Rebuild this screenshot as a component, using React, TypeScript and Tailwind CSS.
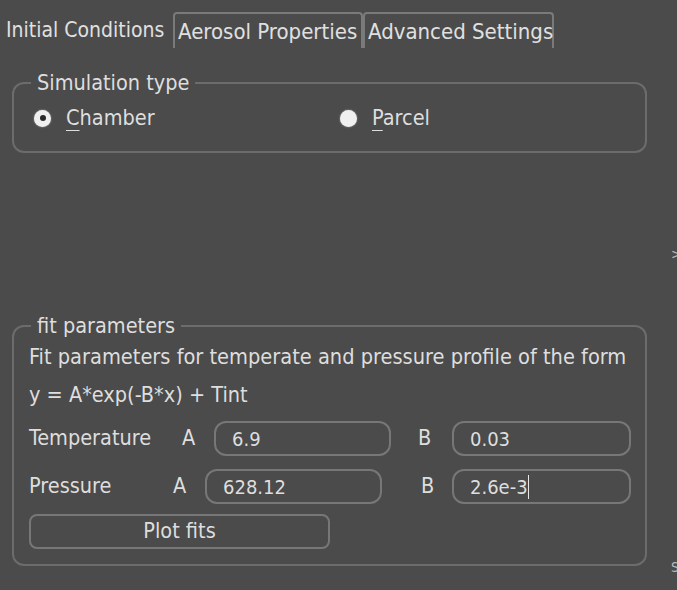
import React from "react";

const font = { fontFamily: '"DejaVu Sans Condensed", "DejaVu Sans", sans-serif' };

function Radio({ checked, label, ul }: { checked: boolean; label: string; ul: string }) {
  return (
    <div className="flex items-center">
      <div className="w-[17px] h-[17px] rounded-full bg-[#f0f0f0] flex items-center justify-center shadow-[0_0_2px_rgba(255,255,255,0.5)]">
        {checked && <div className="w-[6px] h-[6px] rounded-full bg-[#2a2a2a]" />}
      </div>
      <span className="ml-[15px] text-[21.5px] leading-[24px] text-[#dedede]">
        <span className="underline decoration-1 underline-offset-[5px]">{ul}</span>
        {label}
      </span>
    </div>
  );
}

function Field({ value, w, caret }: { value: string; w: string; caret?: boolean }) {
  return (
    <div className={`${w} h-[35px] rounded-[12px] border-2 border-[#777777] flex items-center pl-[16px] text-[20px] text-[#dedede]`}>
      {value}
      {caret && <span className="inline-block w-[1px] h-[24px] bg-[#e8e8e8]" />}
    </div>
  );
}

export default function App() {
  return (
    <div
      className="w-[677px] h-[590px] bg-[#4b4b4b] overflow-hidden relative text-[#dcdcdc]"
      style={font}
    >
      {/* Tabs */}
      <div className="flex items-end pt-[12px] h-[48px]">
        <div className="w-[173px] pl-[6px] h-[36px] border-t-2 border-transparent flex items-center text-[21px] text-[#e0e0e0] whitespace-nowrap">
          Initial Conditions
        </div>
        <div className="w-[190px] h-[36px] border-l-2 border-t-2 border-r-2 border-[#7a7a7a] rounded-t-[4px] px-[3px] flex items-center text-[22px] text-[#e0e0e0] whitespace-nowrap">
          Aerosol Properties
        </div>
        <div className="w-[191px] h-[36px] border-l-2 border-t-2 border-r-2 border-[#7a7a7a] rounded-t-[4px] px-[3px] flex items-center text-[22px] text-[#e0e0e0] whitespace-nowrap">
          Advanced Settings
        </div>
      </div>

      <div className="px-[12px] pr-[30px]">
        {/* Simulation type */}
        <fieldset className="mt-[24px] border-2 border-[#6c6c6c] rounded-[12px] pl-[16px] h-[81px]">
          <legend className="ml-[1px] px-[6px] text-[21.5px] text-[#dedede] leading-[22px]">
            Simulation type
          </legend>
          <div className="flex items-center mt-[12px] ml-[4px]">
            <div className="w-[306px]">
              <Radio checked ul="C" label="hamber" />
            </div>
            <Radio checked={false} ul="P" label="arcel" />
          </div>
        </fieldset>

        {/* fit parameters */}
        <fieldset className="mt-[162px] border-2 border-[#6c6c6c] rounded-[12px] pl-[15px] pr-[10px] h-[251px]">
          <legend className="ml-[2px] px-[6px] text-[21.5px] text-[#dedede] leading-[22px]">
            fit parameters
          </legend>
          <div className="text-[21.6px] text-[#dedede] leading-[38px] mt-[1px] whitespace-nowrap">
            Fit parameters for temperate and pressure profile of the form
          </div>
          <div className="text-[21.5px] text-[#dedede] leading-[38px]">y = A*exp(-B*x) + Tint</div>

          <div className="flex items-center mt-[7px] text-[21.5px] text-[#dedede]">
            <span className="w-[153px]">Temperature</span>
            <span className="w-[32px]">A</span>
            <Field value="6.9" w="w-[177px]" />
            <span className="ml-[27px] w-[34px]">B</span>
            <Field value="0.03" w="w-[179px]" />
          </div>
          <div className="flex items-center mt-[13px] text-[21.5px] text-[#dedede]">
            <span className="w-[144px]">Pressure</span>
            <span className="w-[32px]">A</span>
            <Field value="628.12" w="w-[177px]" />
            <span className="ml-[39px] w-[31px]">B</span>
            <Field value="2.6e-3" w="w-[179px]" caret />
          </div>
          <button className="mt-[10px] w-[301px] h-[35px] rounded-[8px] border-2 border-[#777777] text-[21.5px] text-[#dedede] flex items-center justify-center">
            Plot fits
          </button>
        </fieldset>
      </div>

      <div className="absolute left-[671px] top-[244px] text-[14px] text-[#bbbbbb]">&gt;</div>
      <div className="absolute left-[671px] top-[557px] text-[14px] text-[#bbbbbb]">S</div>
    </div>
  );
}
